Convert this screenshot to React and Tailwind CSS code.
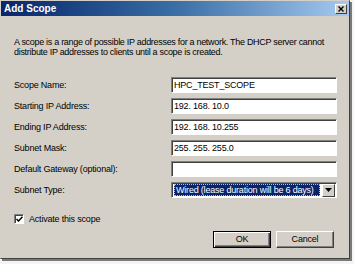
import React from 'react';

const font = { fontFamily: '"Liberation Sans", Arial, sans-serif' };

const rows = [
  { label: 'Scope Name:', value: 'HPC_TEST_SCOPE' },
  { label: 'Starting IP Address:', value: '192. 168. 10.0' },
  { label: 'Ending IP Address:', value: '192. 168. 10.255' },
  { label: 'Subnet Mask:', value: '255. 255. 255.0' },
  { label: 'Default Gateway (optional):', value: '' },
];

const Field = ({ children }) => (
  <div className="h-[16px] bg-white border border-t-[#808080] border-l-[#808080] border-b-white border-r-white shadow-[inset_1px_1px_0_#404040] flex items-center pl-[2px] text-[9px] tracking-[-0.2px] text-black leading-none whitespace-nowrap">
    {children}
  </div>
);

const Button = ({ children, primary }) => (
  <div
    className={
      'w-[58px] h-[17px] flex items-center justify-center text-[9px] tracking-[-0.2px] text-black bg-[#d4d0c8] ' +
      (primary
        ? 'border border-black shadow-[inset_1px_1px_0_#ffffff,inset_-1px_-1px_0_#404040,inset_-2px_-2px_0_#808080]'
        : 'border border-t-white border-l-white border-b-[#404040] border-r-[#404040] shadow-[inset_-1px_-1px_0_#808080]')
    }
  >
    {children}
  </div>
);

export default function App() {
  return (
    <div className="w-[354px] h-[264px] bg-[#f4f4f4] overflow-hidden" style={font}>
      <div className="w-[350px] h-[259px] flex flex-col bg-[#d4d0c8] border border-t-[#d4d0c8] border-l-[#d4d0c8] border-r-[#404040] border-b-[#404040] shadow-[2px_2px_0_#7a7a7a]">
        <div className="h-[15px] flex items-center justify-between bg-gradient-to-r from-[#0a246a] via-[#3a6ea5] to-[#a6caf0] pl-[3px] pr-[2px]">
          <span className="text-white font-bold text-[10px] leading-none">Add Scope</span>
          <div className="w-[12px] h-[10px] bg-[#d4d0c8] border border-t-white border-l-white border-b-[#404040] border-r-[#404040] flex items-center justify-center">
            <svg width="6" height="6" viewBox="0 0 6 6">
              <path d="M0.5 0.5 L5.5 5.5 M5.5 0.5 L0.5 5.5" stroke="#000" strokeWidth="1.4" />
            </svg>
          </div>
        </div>

        <div className="flex flex-col pl-[13px] pr-[12px]">
          <p className="mt-[21px] text-[9px] tracking-[-0.3px] leading-[10px] text-black whitespace-nowrap">
            A scope is a range of possible IP addresses for a network. The DHCP server cannot
            <br />
            distribute IP addresses to clients until a scope is created.
          </p>

          <div className="mt-[20px] grid grid-cols-[157px_166px] gap-y-[5px] items-center text-[9px] tracking-[-0.2px] text-black">
            {rows.map((r) => (
              <React.Fragment key={r.label}>
                <span className="leading-none whitespace-nowrap">{r.label}</span>
                <Field>{r.value}</Field>
              </React.Fragment>
            ))}
            <span className="leading-none">Subnet Type:</span>
            <div className="h-[16px] bg-white border border-t-[#808080] border-l-[#808080] border-b-white border-r-white shadow-[inset_1px_1px_0_#404040] flex items-center pl-[2px] pr-[1px] gap-[2px]">
              <div className="flex-1 h-[12px] bg-[#0a246a] border border-dotted border-[#c0c0c0] flex items-center text-white text-[9px] tracking-[-0.2px] leading-none pl-[1px] whitespace-nowrap overflow-hidden">
                Wired (lease duration will be 6 days)
              </div>
              <div className="w-[13px] h-[13px] bg-[#d4d0c8] border border-t-white border-l-white border-b-[#404040] border-r-[#404040] flex items-center justify-center">
                <svg width="7" height="4" viewBox="0 0 7 4">
                  <path d="M0 0 H7 L3.5 4 Z" fill="#000" />
                </svg>
              </div>
            </div>
          </div>

          <div className="mt-[16px] flex items-center gap-[5px]">
            <div className="w-[10px] h-[10px] bg-white border border-t-[#808080] border-l-[#808080] border-b-white border-r-white shadow-[inset_1px_1px_0_#404040] flex items-center justify-center">
              <svg width="7" height="6" viewBox="0 0 7 6">
                <path d="M0.5 3 L2.5 5 L6.5 0.8" stroke="#000" strokeWidth="1.5" fill="none" />
              </svg>
            </div>
            <span className="text-[9px] tracking-[-0.2px] text-black leading-none">Activate this scope</span>
          </div>

          <div className="mt-[7px] flex justify-end gap-[5px] pr-[3px]">
            <Button primary>OK</Button>
            <Button>Cancel</Button>
          </div>
        </div>
      </div>
    </div>
  );
}
